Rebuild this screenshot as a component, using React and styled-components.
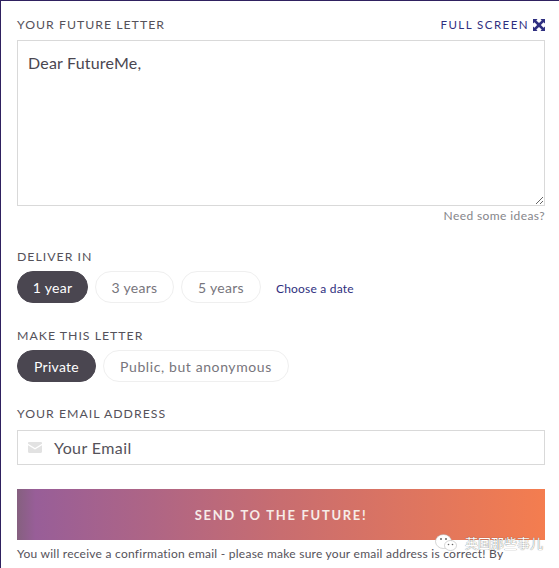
import React from 'react'
import styled, { createGlobalStyle } from 'styled-components'

const GlobalStyle = createGlobalStyle`
html, body {
  margin: 0;
  padding: 0;
  height: 568px;
  overflow: hidden;
  background: #fff;
}
* { box-sizing: border-box; }
`
const Page = styled.div`
position: relative;
width: 559px;
height: 568px;
overflow: hidden;
padding: 17px 14px 0 16px;
border-top: 1px solid #2f2160;
border-left: 1px solid #2f2160;
font-family: 'Lato', sans-serif;
color: #4a4650;
`
const TopRow = styled.div`
display: flex;
justify-content: space-between;
align-items: flex-start;
height: 15px;
margin-bottom: 7px;
`
const Label = styled.div`
font-size: 12.3px;
line-height: 14px;
letter-spacing: 1px;
color: #55525a;
margin-bottom: ${(p) => p.$gap || 7}px;
`
const TopLabel = styled(Label)`
margin-bottom: 0;
`
const FullScreen = styled.a`
display: flex;
align-items: center;
gap: 4px;
font-size: 11.5px;
line-height: 13px;
letter-spacing: 1.45px;
color: #2f2f80;
`
const Letter = styled.textarea`
display: block;
width: 100%;
height: 166px;
padding: 12px 10px;
border: 1px solid #d9d9d9;
border-radius: 0;
outline: none;
resize: vertical;
font-family: 'Lato', sans-serif;
font-size: 16px;
line-height: 20px;
letter-spacing: 0.2px;
color: #4a4650;
background: #fff;
`
const Hint = styled.div`
text-align: right;
font-size: 12px;
line-height: 14px;
letter-spacing: 0.4px;
color: #85858a;
margin: 3px 0 27px;
`
const Pills = styled.div`
display: flex;
align-items: center;
gap: 7px;
margin-bottom: ${(p) => p.$gap}px;
`
const Pill = styled.button`
height: 32px;
padding: 0;
width: ${(p) => p.$width}px;
border-radius: 16px;
border: 1px solid ${(p) => (p.$active ? '#4a4650' : '#efefef')};
background: ${(p) => (p.$active ? '#4a4650' : '#fff')};
color: ${(p) => (p.$active ? '#fff' : '#77757c')};
font-family: 'Lato', sans-serif;
font-size: 14px;
letter-spacing: ${(p) => p.$spacing || 0.3}px;
`
const DateLink = styled.a`
margin-left: 8px;
padding-top: 2px;
font-size: 12px;
letter-spacing: 0.2px;
color: #2f2f80;
`
const EmailBox = styled.div`
display: flex;
align-items: center;
gap: 12px;
height: 35px;
padding: 0 10px;
border: 1px solid #d9d9d9;
margin-bottom: 24px;
`
const EmailText = styled.span`
font-size: 16px;
color: #55525a;
letter-spacing: 0.4px;
`
const SendButton = styled.button`
display: block;
width: 100%;
height: 51px;
border: none;
background: linear-gradient(90deg, #85607f 0%, #985e98 3.5%, #c86d70 50%, #f47d4f 100%);
color: #f6ece8;
font-family: 'Lato', sans-serif;
font-size: 13px;
font-weight: 700;
letter-spacing: 1.7px;
margin-bottom: 4px;
`
const Notice = styled.p`
margin: 0;
width: 510px;
font-size: 12px;
line-height: 20px;
letter-spacing: 0.25px;
color: #55525a;
`
const Watermark = styled.div`
position: absolute;
left: 434px;
top: 532px;
display: flex;
align-items: center;
gap: 8px;
font-family: 'Noto Sans CJK SC', sans-serif;
font-size: 13px;
color: #fff;
text-shadow: 0 0 1px #444;
`

function ExpandIcon() {
  return (
    <svg width="12" height="12" viewBox="0 0 12 12" fill="#2f2f80">
      <path d="M0 0h4.500L3.300 1.500 6 4.100l2.700-2.600L7.500 0H12v4.500L10.500 3.300 7.900 6l2.600 2.700L12 7.500V12H7.500l1.200-1.500L6 7.900l-2.700 2.600L4.500 12H0V7.500l1.500 1.200L4.100 6 1.500 3.300 0 4.500z" />
    </svg>
  )
}

function MailIcon() {
  return (
    <svg width="14" height="11" viewBox="0 0 14 11" fill="#e2e2e2">
      <path d="M0 1.200C0 .5.500 0 1.200 0h11.600c.7 0 1.200.5 1.200 1.200v.5L7 6 0 1.700z" />
      <path d="M0 3.200 7 7.500l7-4.300v6.600c0 .7-.5 1.200-1.200 1.200H1.200C.5 11 0 10.500 0 9.800z" />
    </svg>
  )
}

function WechatIcon() {
  return (
    <svg width="22" height="18" viewBox="0 0 22 18">
      <ellipse cx="8.500" cy="7.500" rx="8" ry="7" fill="#fff" stroke="#aaa" strokeWidth="0.5" />
      <ellipse cx="15.500" cy="11.500" rx="6" ry="5" fill="#fff" stroke="#aaa" strokeWidth="0.5" />
      <circle cx="6" cy="5" r="1" fill="#666" />
      <circle cx="11" cy="5" r="1" fill="#666" />
      <circle cx="13.500" cy="10.500" r="0.8" fill="#666" />
      <circle cx="17.500" cy="10.500" r="0.8" fill="#666" />
    </svg>
  )
}

export default function App() {
  return (
    <>
      <GlobalStyle />
      <Page>
        <TopRow>
          <TopLabel>YOUR FUTURE LETTER</TopLabel>
          <FullScreen>
            FULL SCREEN
            <ExpandIcon />
          </FullScreen>
        </TopRow>
        <Letter defaultValue="Dear FutureMe," />
        <Hint>Need some ideas?</Hint>

        <Label>DELIVER IN</Label>
        <Pills $gap={26}>
          <Pill $active $width={71}>1 year</Pill>
          <Pill $width={79}>3 years</Pill>
          <Pill $width={80}>5 years</Pill>
          <DateLink>Choose a date</DateLink>
        </Pills>

        <Label>MAKE THIS LETTER</Label>
        <Pills $gap={25}>
          <Pill $active $width={79}>Private</Pill>
          <Pill $width={186} $spacing={0.6}>Public, but anonymous</Pill>
        </Pills>

        <Label $gap={9}>YOUR EMAIL ADDRESS</Label>
        <EmailBox>
          <MailIcon />
          <EmailText>Your Email</EmailText>
        </EmailBox>

        <SendButton>SEND TO THE FUTURE!</SendButton>
        <Notice>
          You will receive a confirmation email - please make sure your email address is correct! By
          creating a letter, you agree to our terms and privacy policy
        </Notice>
        <Watermark>
          <WechatIcon />
          英国那些事儿
        </Watermark>
      </Page>
    </>
  )
}
